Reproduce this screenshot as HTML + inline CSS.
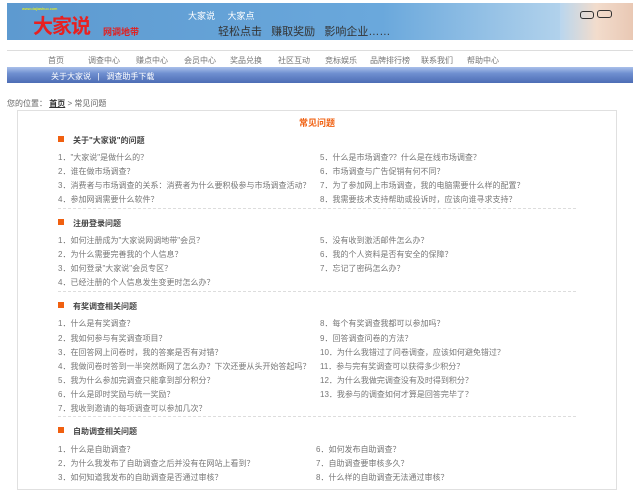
<!DOCTYPE html><html><head><meta charset="utf-8"><style>
*{margin:0;padding:0;box-sizing:border-box}
body{width:640px;height:480px;overflow:hidden;background:#fff;font-family:"Liberation Sans","Noto Sans CJK SC",sans-serif;font-size:8px;color:#777;position:relative}
.a{position:absolute;white-space:nowrap}
.h{font-weight:bold;color:#444;font-size:8px}
.sq{position:absolute;width:6px;height:6px;background:#f06010}
.dl{position:absolute;left:58px;width:518px;border-top:1px dashed #ddd}
</style></head><body>
<div class="a" style="left:7px;top:3px;width:626px;height:37px;background:linear-gradient(90deg,#5d9ad0 0%,#6aa8dc 60%,#a9cdea 85%,#cfe2f1 100%)"></div>
<div class="a" style="left:560px;top:3px;width:73px;height:37px;background:linear-gradient(90deg,#b9d6ee,#f2dccc 50%,#e9c8b4)"></div>
<div class="a" style="left:580px;top:11px;width:14px;height:8px;border:1.5px solid #333;border-radius:3px"></div>
<div class="a" style="left:597px;top:10px;width:15px;height:8px;border:1.5px solid #333;border-radius:3px"></div>
<div class="a" style="left:22px;top:6px;font-size:4px;color:#ff0">www.dajiashuo.com</div>
<div class="a" style="left:33px;top:10px;font-size:20px;color:#e82020;font-weight:bold;letter-spacing:-1px">大家说</div>
<div class="a" style="left:103px;top:25px;font-size:9px;color:#e02020;font-weight:bold">网调地带</div>
<div class="a" style="left:188px;top:9px;font-size:9px;color:#fff">大家说 &nbsp; &nbsp; 大家点</div>
<div class="a" style="left:218px;top:23px;font-size:11px;color:#333">轻松点击 &nbsp; 赚取奖励 &nbsp; 影响企业……</div>
<div class="a" style="left:7px;top:50px;width:626px;height:17px;border-top:1px solid #ddd;background:#fff"></div>
<div class="a" style="left:48px;top:55px">首页</div>
<div class="a" style="left:88px;top:55px">调查中心</div>
<div class="a" style="left:136px;top:55px">赚点中心</div>
<div class="a" style="left:184px;top:55px">会员中心</div>
<div class="a" style="left:230px;top:55px">奖品兑换</div>
<div class="a" style="left:278px;top:55px">社区互动</div>
<div class="a" style="left:325px;top:55px">竞标娱乐</div>
<div class="a" style="left:370px;top:55px">品牌排行榜</div>
<div class="a" style="left:421px;top:55px">联系我们</div>
<div class="a" style="left:467px;top:55px">帮助中心</div>
<div class="a" style="left:7px;top:67px;width:626px;height:16px;background:linear-gradient(#aac0ea,#6f8fd0 40%,#4d6db5)"></div>
<div class="a" style="left:51px;top:71px;color:#fff">关于大家说 &nbsp; | &nbsp; 调查助手下载</div>
<div class="a" style="left:7px;top:98px;color:#666">您的位置： <u style="color:#333;font-weight:bold">首页</u> &gt; 常见问题</div>
<div class="a" style="left:17px;top:110px;width:600px;height:380px;border:1px solid #e0e0e0"></div>
<div class="a" style="left:299px;top:116px;font-size:9px;font-weight:bold;color:#f06010">常见问题</div>

<div class="sq" style="left:58px;top:136px"></div><div class="a h" style="left:73px;top:135px">关于"大家说"的问题</div>
<div class="a" style="left:58px;top:152px">1．"大家说"是做什么的？</div>
<div class="a" style="left:58px;top:166px">2．谁在做市场调查？</div>
<div class="a" style="left:58px;top:180px">3．消费者与市场调查的关系：消费者为什么要积极参与市场调查活动？</div>
<div class="a" style="left:58px;top:194px">4．参加网调需要什么软件？</div>
<div class="a" style="left:320px;top:152px">5．什么是市场调查?？什么是在线市场调查？</div>
<div class="a" style="left:320px;top:166px">6．市场调查与广告促销有何不同？</div>
<div class="a" style="left:320px;top:180px">7．为了参加网上市场调查，我的电脑需要什么样的配置？</div>
<div class="a" style="left:320px;top:194px">8．我需要技术支持帮助或投诉时，应该向谁寻求支持？</div>
<div class="dl" style="top:208px"></div>

<div class="sq" style="left:58px;top:219px"></div><div class="a h" style="left:73px;top:218px">注册登录问题</div>
<div class="a" style="left:58px;top:235px">1．如何注册成为"大家说网调地带"会员？</div>
<div class="a" style="left:58px;top:249px">2．为什么需要完善我的个人信息？</div>
<div class="a" style="left:58px;top:263px">3．如何登录"大家说"会员专区？</div>
<div class="a" style="left:58px;top:277px">4．已经注册的个人信息发生变更时怎么办？</div>
<div class="a" style="left:320px;top:235px">5．没有收到激活邮件怎么办？</div>
<div class="a" style="left:320px;top:249px">6．我的个人资料是否有安全的保障？</div>
<div class="a" style="left:320px;top:263px">7．忘记了密码怎么办？</div>
<div class="dl" style="top:291px"></div>

<div class="sq" style="left:58px;top:302px"></div><div class="a h" style="left:73px;top:301px">有奖调查相关问题</div>
<div class="a" style="left:58px;top:318px">1．什么是有奖调查？</div>
<div class="a" style="left:58px;top:333px">2．我如何参与有奖调查项目？</div>
<div class="a" style="left:58px;top:347px">3．在回答网上问卷时，我的答案是否有对错？</div>
<div class="a" style="left:58px;top:361px">4．我做问卷时答到一半突然断网了怎么办？下次还要从头开始答起吗？</div>
<div class="a" style="left:58px;top:375px">5．我为什么参加完调查只能拿到部分积分？</div>
<div class="a" style="left:58px;top:389px">6．什么是即时奖励与统一奖励？</div>
<div class="a" style="left:58px;top:403px">7．我收到邀请的每项调查可以参加几次？</div>
<div class="a" style="left:320px;top:318px">8．每个有奖调查我都可以参加吗？</div>
<div class="a" style="left:320px;top:333px">9．回答调查问卷的方法？</div>
<div class="a" style="left:320px;top:347px">10．为什么我错过了问卷调查，应该如何避免错过？</div>
<div class="a" style="left:320px;top:361px">11．参与完有奖调查可以获得多少积分？</div>
<div class="a" style="left:320px;top:375px">12．为什么我做完调查没有及时得到积分？</div>
<div class="a" style="left:320px;top:389px">13．我参与的调查如何才算是回答完毕了？</div>
<div class="dl" style="top:416px"></div>

<div class="sq" style="left:58px;top:427px"></div><div class="a h" style="left:73px;top:426px">自助调查相关问题</div>
<div class="a" style="left:58px;top:444px">1．什么是自助调查？</div>
<div class="a" style="left:58px;top:458px">2．为什么我发布了自助调查之后并没有在网站上看到？</div>
<div class="a" style="left:58px;top:472px">3．如何知道我发布的自助调查是否通过审核？</div>
<div class="a" style="left:316px;top:444px">6．如何发布自助调查？</div>
<div class="a" style="left:316px;top:458px">7．自助调查要审核多久？</div>
<div class="a" style="left:316px;top:472px">8．什么样的自助调查无法通过审核？</div>
</body></html>
